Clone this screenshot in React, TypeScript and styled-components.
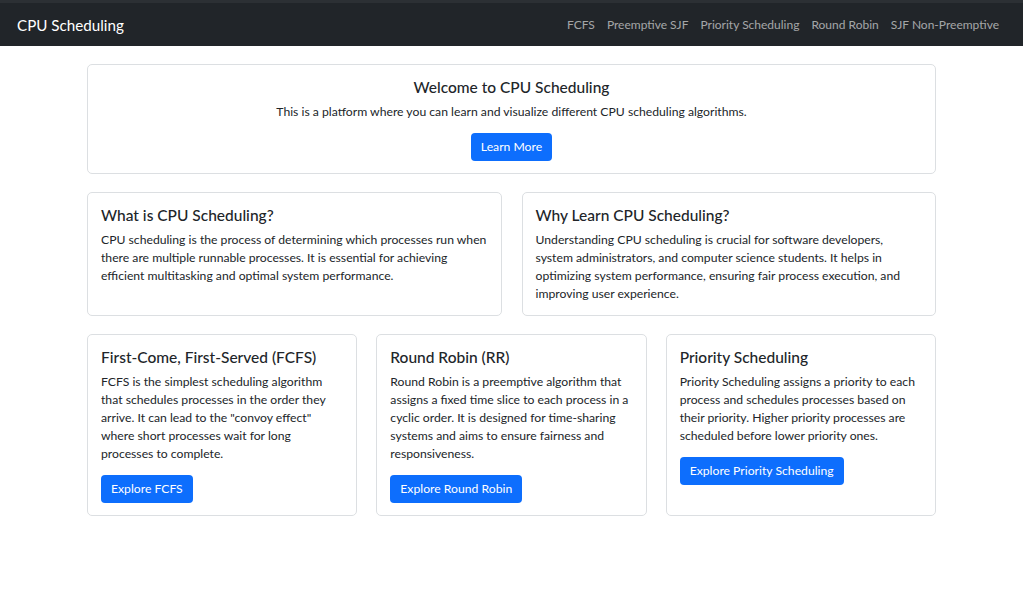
import React from "react";
import styled, { createGlobalStyle } from "styled-components";

const GlobalStyle = createGlobalStyle`
  * { box-sizing: border-box; }
  body {
    margin: 0;
    background: #fff;
    color: #212529;
    font-family: Lato, "Noto Sans", sans-serif;
    font-size: 12.2px;
    line-height: 18px;
  }
`;

const Navbar = styled.nav`
  height: 46px;
  background: #212529;
  border-top: 3px solid #2c3034;
  display: flex;
  align-items: center;
  justify-content: space-between;
  padding: 0 18px 0 17px;
`;

const Brand = styled.a`
  color: #fff;
  font-size: 15.2px;
  text-decoration: none;
`;

const NavLinks = styled.ul`
  display: flex;
  list-style: none;
  margin: 0;
  padding: 0;
`;

const NavLink = styled.a`
  display: block;
  padding: 6px 6px;
  color: rgba(255, 255, 255, 0.6);
  font-size: 12px;
  text-decoration: none;
`;

const Container = styled.main`
  width: 849px;
  margin: 18px auto 0;
  display: flex;
  flex-direction: column;
  gap: 18px;
`;

type GridProps = {
  cols: number;
  gap: number;
};

const Row = styled.div<GridProps>`
  display: grid;
  grid-template-columns: repeat(${(props) => props.cols}, 1fr);
  gap: ${(props) => props.gap}px;
`;

type CardProps = {
  centered?: boolean;
};

const Card = styled.section<CardProps>`
  border: 1px solid #dcdfe2;
  border-radius: 5px;
  padding: 13px 13px 12px;
  text-align: ${(props) => (props.centered ? "center" : "left")};
`;

const Title = styled.h5`
  margin: 0 0 7px;
  font-size: 15.5px;
  font-weight: 500;
  line-height: 18px;
`;

const Text = styled.p`
  margin: 0 0 12px;
  &:last-child {
    margin-bottom: 0;
  }
`;

const Button = styled.a`
  display: inline-block;
  height: 28px;
  line-height: 28px;
  padding: 0 10px;
  border-radius: 4px;
  background: #0d6efd;
  color: #fff;
  font-size: 12.2px;
  text-decoration: none;
`;

const links = [
  "FCFS",
  "Preemptive SJF",
  "Priority Scheduling",
  "Round Robin",
  "SJF Non-Preemptive",
];

const algorithms = [
  {
    title: "First-Come, First-Served (FCFS)",
    text: 'FCFS is the simplest scheduling algorithm that schedules processes in the order they arrive. It can lead to the "convoy effect" where short processes wait for long processes to complete.',
    button: "Explore FCFS",
  },
  {
    title: "Round Robin (RR)",
    text: "Round Robin is a preemptive algorithm that assigns a fixed time slice to each process in a cyclic order. It is designed for time-sharing systems and aims to ensure fairness and responsiveness.",
    button: "Explore Round Robin",
  },
  {
    title: "Priority Scheduling",
    text: "Priority Scheduling assigns a priority to each process and schedules processes based on their priority. Higher priority processes are scheduled before lower priority ones.",
    button: "Explore Priority Scheduling",
  },
];

export default function App() {
  return (
    <>
      <GlobalStyle />
      <Navbar>
        <Brand href="#">CPU Scheduling</Brand>
        <NavLinks>
          {links.map((link) => (
            <li key={link}>
              <NavLink href="#">{link}</NavLink>
            </li>
          ))}
        </NavLinks>
      </Navbar>
      <Container>
        <Card centered>
          <Title>Welcome to CPU Scheduling</Title>
          <Text>
            This is a platform where you can learn and visualize different CPU
            scheduling algorithms.
          </Text>
          <Button href="#">Learn More</Button>
        </Card>
        <Row cols={2} gap={20}>
          <Card>
            <Title>What is CPU Scheduling?</Title>
            <Text>
              CPU scheduling is the process of determining which processes run
              when there are multiple runnable processes. It is essential for
              achieving efficient multitasking and optimal system performance.
            </Text>
          </Card>
          <Card>
            <Title>Why Learn CPU Scheduling?</Title>
            <Text>
              Understanding CPU scheduling is crucial for software developers,
              system administrators, and computer science students. It helps in
              optimizing system performance, ensuring fair process execution,
              and improving user experience.
            </Text>
          </Card>
        </Row>
        <Row cols={3} gap={19}>
          {algorithms.map((algo) => (
            <Card key={algo.title}>
              <Title>{algo.title}</Title>
              <Text>{algo.text}</Text>
              <Button href="#">{algo.button}</Button>
            </Card>
          ))}
        </Row>
      </Container>
    </>
  );
}
